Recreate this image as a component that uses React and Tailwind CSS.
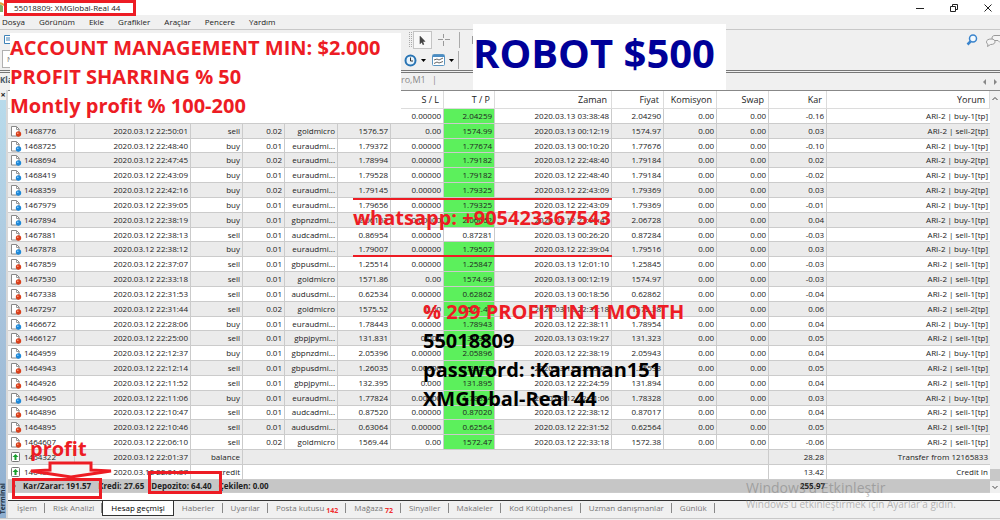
import { FaMousePointer } from "react-icons/fa";

const menu = ["Dosya", "Görünüm", "Ekle", "Grafikler", "Araçlar", "Pencere", "Yardım"];

const orders = [
  ["", "", "", "", "", "", "0.00000", "2.04259", "2020.03.13 03:38:48", "2.04290", "-0.16", "buy-1"],
  ["1468776", "2020.03.12 22:50:01", "sell", "0.02", "goldmicro", "1576.57", "0.00", "1574.99", "2020.03.13 00:12:19", "1574.97", "0.03", "sell-2"],
  ["1468725", "2020.03.12 22:48:40", "buy", "0.01", "euraudmi...", "1.79372", "0.00000", "1.77674", "2020.03.13 00:10:20", "1.77676", "-0.10", "buy-1"],
  ["1468694", "2020.03.12 22:47:45", "buy", "0.02", "euraudmi...", "1.78994", "0.00000", "1.79182", "2020.03.12 22:48:40", "1.79184", "0.02", "buy-2"],
  ["1468419", "2020.03.12 22:43:09", "buy", "0.01", "euraudmi...", "1.79528", "0.00000", "1.79182", "2020.03.12 22:48:40", "1.79184", "-0.02", "buy-1"],
  ["1468359", "2020.03.12 22:42:16", "buy", "0.02", "euraudmi...", "1.79145", "0.00000", "1.79325", "2020.03.12 22:43:09", "1.79369", "0.03", "buy-2"],
  ["1467979", "2020.03.12 22:39:05", "buy", "0.01", "euraudmi...", "1.79656", "0.00000", "1.79325", "2020.03.12 22:43:09", "1.79369", "-0.01", "buy-1"],
  ["1467894", "2020.03.12 22:38:19", "buy", "0.01", "gbpnzdmi...", "2.06162", "0.00000", "2.06662", "2020.03.12 23:09:41", "2.06728", "0.04", "buy-1"],
  ["1467881", "2020.03.12 22:38:13", "sell", "0.01", "audcadmi...", "0.86954", "0.00000", "0.87281", "2020.03.13 00:26:20", "0.87284", "-0.03", "sell-1"],
  ["1467878", "2020.03.12 22:38:12", "buy", "0.01", "euraudmi...", "1.79007", "0.00000", "1.79507", "2020.03.12 22:39:04", "1.79516", "0.03", "buy-1"],
  ["1467859", "2020.03.12 22:37:07", "sell", "0.01", "gbpusdmi...", "1.25514", "0.00000", "1.25847", "2020.03.13 12:01:10", "1.25845", "-0.03", "sell-1"],
  ["1467530", "2020.03.12 22:33:18", "sell", "0.01", "goldmicro", "1571.86", "0.00", "1574.99", "2020.03.13 00:12:19", "1574.97", "-0.03", "sell-1"],
  ["1467338", "2020.03.12 22:31:53", "sell", "0.01", "audusdmi...", "0.62534", "0.00000", "0.62862", "2020.03.13 00:18:56", "0.62862", "-0.04", "sell-1"],
  ["1467297", "2020.03.12 22:31:44", "sell", "0.02", "goldmicro", "1575.52", "0.00", "1572.47", "2020.03.12 22:33:18", "1572.38", "0.06", "sell-2"],
  ["1466672", "2020.03.12 22:28:06", "buy", "0.01", "euraudmi...", "1.78443", "0.00000", "1.78943", "2020.03.12 22:38:11", "1.78954", "0.04", "buy-1"],
  ["1466127", "2020.03.12 22:25:00", "sell", "0.01", "gbpjpymi...", "131.831", "0.000", "131.331", "2020.03.13 03:19:27", "131.323", "0.05", "sell-1"],
  ["1464959", "2020.03.12 22:12:37", "buy", "0.01", "gbpnzdmi...", "2.05396", "0.00000", "2.05896", "2020.03.12 22:38:19", "2.05943", "0.04", "buy-1"],
  ["1464943", "2020.03.12 22:12:14", "sell", "0.01", "gbpusdmi...", "1.26035", "0.00000", "1.25535", "2020.03.12 22:35:03", "1.25533", "0.05", "sell-1"],
  ["1464926", "2020.03.12 22:11:52", "sell", "0.01", "gbpjpymi...", "132.395", "0.000", "131.895", "2020.03.12 22:24:59", "131.894", "0.04", "sell-1"],
  ["1464905", "2020.03.12 22:11:06", "buy", "0.01", "euraudmi...", "1.77824", "0.00000", "1.78324", "2020.03.12 22:31:06", "1.78328", "0.03", "buy-1"],
  ["1464896", "2020.03.12 22:10:47", "sell", "0.01", "audcadmi...", "0.87520", "0.00000", "0.87020", "2020.03.12 22:38:12", "0.87017", "0.04", "sell-1"],
  ["1464895", "2020.03.12 22:10:46", "sell", "0.01", "audusdmi...", "0.63064", "0.00000", "0.62564", "2020.03.12 22:31:52", "0.62564", "0.05", "sell-1"],
  ["1464607", "2020.03.12 22:06:10", "sell", "0.02", "goldmicro", "1569.44", "0.00", "1572.47", "2020.03.12 22:33:18", "1572.38", "-0.06", "sell-1"],
];

const transfers = [
  ["1464322", "2020.03.12 22:01:37", "balance", "28.28", "Transfer from 12165833"],
  ["1464323", "2020.03.12 22:01:37", "credit", "13.42", "Credit In"],
];

const tabs = [
  { name: "İşlem" },
  { name: "Risk Analizi" },
  { name: "Hesap geçmişi", active: true },
  { name: "Haberler" },
  { name: "Uyarılar" },
  { name: "Posta kutusu", count: 142 },
  { name: "Mağaza", count: 72 },
  { name: "Sinyaller" },
  { name: "Makaleler" },
  { name: "Kod Kütüphanesi" },
  { name: "Uzman danışmanlar" },
  { name: "Günlük" },
];

const OrderIcon = ({ type }) => (
  <svg width="12" height="12" viewBox="0 0 12 12" className="shrink-0">
    <path d="M1.5 1.5h5l2.5 2.5v7h-7.500z" fill="#fff" stroke="#888" />
    <path d="M6.500 1.500v3h3" fill="none" stroke="#999" />
    <circle cx="8.500" cy="9" r="2.700" fill={type === "buy" ? "#1e88d8" : "#d8401c"} />
    <circle cx="7.800" cy="8.200" r="0.800" fill={type === "buy" ? "#8fd0ff" : "#ffa88a"} />
  </svg>
);

const TransferIcon = () => (
  <svg width="12" height="12" viewBox="0 0 12 12" className="shrink-0">
    <rect x="1.500" y="1.500" width="8" height="9" rx="1" fill="#fff" stroke="#777" />
    <path d="M5.500 3 L8.500 6 H6.500 V9 H4.500 V6 H2.500 Z" fill="#18a02c" />
  </svg>
);

const TitleBar = () => (
  <header className="flex h-[15px] items-center bg-white pr-2">
    <svg width="6" height="12" viewBox="0 0 6 12">
      <path d="M0 2l3 2v6H0z" fill="#7fb069" />
      <path d="M0 1l4 2" stroke="#e2a03c" strokeWidth="2" />
    </svg>
    <h1 className="flex-1 pl-2 text-[8px] leading-[12px]">55018809: XMGlobal-Real 44</h1>
    <div className="flex gap-[26px]">
      <button aria-label="Küçült">
        <svg width="8" height="10" viewBox="0 0 8 10" stroke="#222"><path d="M0 5.500h8" /></svg>
      </button>
      <button aria-label="Geri yükle">
        <svg width="8" height="10" viewBox="0 0 8 10" fill="none" stroke="#222">
          <path d="M.5 3.500h5v5h-5zM2.500 3.500v-2h5v5h-2" />
        </svg>
      </button>
      <button aria-label="Kapat">
        <svg width="8" height="10" viewBox="0 0 8 10" stroke="#222"><path d="M.5 1.500l7 7M7.500 1.500l-7 7" /></svg>
      </button>
    </div>
  </header>
);

const Toolbars = () => (
  <div className="flex h-[41px] justify-between border-t border-[#c8c8c8]">
    <div className="flex w-[401px] flex-col">
      <div className="flex h-5 items-center pl-1">
        <svg width="10" height="10" viewBox="0 0 10 10" fill="#fff" stroke="#3d82b8">
          <path d="M.5 .5h8v8h-8zM2 3h5M2 5h5" />
          <path d="M6 7h3M7.500 5.500v3" stroke="#2ca02c" />
        </svg>
      </div>
      <div className="ml-[2px] h-[18px] w-6 border border-[#b0b0b0] bg-white pl-1 text-[8px] leading-[16px] text-[#777]">N</div>
    </div>
    <div className="flex flex-1 flex-col">
      <div className="flex h-5 items-center pl-2">
        <svg width="4" height="16" viewBox="0 0 4 16" stroke="#aaa" strokeDasharray="1 1">
          <path d="M.5 0v16M2.500 0v16" />
        </svg>
        <button aria-label="İmleç" className="flex h-[18px] w-[19px] items-center justify-center border border-[#c4c4c4] bg-[#f8f8f8]">
          <FaMousePointer size={9} color="#444" />
        </button>
        <button aria-label="Artı imleç" className="ml-1">
          <svg width="15" height="14" viewBox="0 0 15 14" stroke="#999"><path d="M2 6.500h5M9 6.500h5M7.500 1v4M7.500 8v5" /></svg>
        </button>
        <span className="ml-2 h-4 w-px bg-[#aaa]" />
        <span className="ml-3 h-2 w-px bg-[#999]" />
      </div>
      <div className="flex h-5 items-center gap-[2px] pl-[3px]">
        <button aria-label="Periyotlar" className="flex items-center gap-1">
          <svg width="13" height="13" viewBox="0 0 13 13">
            <circle cx="6.500" cy="6.500" r="5" fill="#e8f4fc" stroke="#2874b4" strokeWidth="2" />
            <path d="M6.500 3.500v3.500h2.500" fill="none" stroke="#333" />
          </svg>
          <svg width="5" height="3" viewBox="0 0 5 3"><path d="M0 0h5L2.500 3z" /></svg>
        </button>
        <button aria-label="Şablonlar" className="ml-1 flex items-center gap-1">
          <svg width="13" height="12" viewBox="0 0 13 12">
            <rect x=".5" y=".5" width="12" height="11" rx="1" fill="#fff" stroke="#5a94c0" />
            <path d="M1 2h11" stroke="#4a8cc4" strokeWidth="2" />
            <path d="M2 6l3-1 2 1 4-2M2 9.500l3-1.500 2 1 4-1.500" fill="none" stroke="#666" />
          </svg>
          <svg width="5" height="3" viewBox="0 0 5 3"><path d="M0 0h5L2.500 3z" /></svg>
        </button>
        <span className="ml-[2px] h-[18px] w-px bg-[#aaa]" />
      </div>
    </div>
    <div className="flex h-5 items-center gap-2">
      <button aria-label="Ara">
        <svg width="12" height="12" viewBox="0 0 12 12" fill="none" stroke="#3a84cc">
          <circle cx="7" cy="4.500" r="3.500" strokeWidth="1.500" fill="#f4faff" />
          <path d="M4.500 7.500l-3 3" strokeWidth="2.500" />
        </svg>
      </button>
      <button aria-label="Sohbet">
        <svg width="14" height="13" viewBox="0 0 14 13" fill="#f4f4f4" stroke="#999">
          <path d="M14 1.500H9C7 1.500 6 2.500 6 4s1 2.500 3 2.500h3l2 2" />
          <path d="M5 5C2.500 5 .5 6 .5 7.800S1.500 10 2 10.300L1.500 12.500 4.500 10.500C7.500 10.500 9 9.500 9 7.800S7.500 5 5 5z" />
        </svg>
      </button>
    </div>
  </div>
);

const OrderRow = ({ order }) => {
  const [ticket, opened, type, size, symbol, price, sl, tp, closed, closePrice, profit, note] = order;
  return (
    <tr>
      <td>
        <div className="flex items-center gap-[2px] pl-[2px]">
          {ticket && <OrderIcon type={type} />}
          {ticket}
        </div>
      </td>
      <td>{opened}</td>
      <td>{type}</td>
      <td>{size}</td>
      <td>{symbol}</td>
      <td>{price}</td>
      <td>{sl}</td>
      <td className={ticket === "1467881" ? "" : "bg-[#5cf05c]"}>{tp}</td>
      <td>{closed}</td>
      <td>{closePrice}</td>
      <td>0.00</td>
      <td>0.00</td>
      <td>{profit}</td>
      <td>ARI-2 | {note}[tp]</td>
    </tr>
  );
};

const History = () => (
  <table className="h-[402px] w-full table-fixed border-separate border-spacing-0 bg-white text-right text-[8px] leading-[12px] whitespace-nowrap [&_td]:border-r [&_td]:border-b [&_td]:border-[#cbcbcb] [&_td]:p-0 [&_td]:pr-[2px] [&_td:last-child]:border-r-0 [&_th]:border-r [&_th]:border-b [&_th]:border-[#dcdcdc] [&_th]:p-0 [&_th]:pr-1 [&_th]:font-normal">
    <colgroup>
      <col className="w-[67px]" />
      <col className="w-[116px]" />
      <col className="w-[52px]" />
      <col className="w-[42px]" />
      <col className="w-[53px]" />
      <col className="w-[53px]" />
      <col className="w-[53px]" />
      <col className="w-[51px]" />
      <col className="w-[117px]" />
      <col className="w-[52px]" />
      <col className="w-[53px]" />
      <col className="w-[52px]" />
      <col className="w-[58px]" />
      <col />
    </colgroup>
    <thead>
      <tr className="h-[18px] text-[9px]">
        <th colSpan={6} />
        <th>S / L</th>
        <th>T / P</th>
        <th>Zaman</th>
        <th>Fiyat</th>
        <th>Komisyon</th>
        <th>Swap</th>
        <th>Kar</th>
        <th>Yorum</th>
      </tr>
    </thead>
    <tbody className="[&>tr:nth-child(even)]:bg-[#ebebeb]">
      {orders.map((order, i) => (
        <OrderRow key={i} order={order} />
      ))}
      {transfers.map(([ticket, time, type, amount, note]) => (
        <tr key={ticket}>
          <td>
            <div className="flex items-center gap-[2px] pl-[2px]">
              <TransferIcon />
              {ticket}
            </div>
          </td>
          <td>{time}</td>
          <td>{type}</td>
          <td colSpan={9} />
          <td>{amount}</td>
          <td>{note}</td>
        </tr>
      ))}
    </tbody>
    <tfoot className="bg-[#c6c6c6] font-bold">
      <tr>
        <td colSpan={12} className="border-r-0!">
          <div className="flex items-center gap-[7px] pl-1">
            <span className="h-1 w-1 rounded-full border border-[#888]" />
            <span>Kar/Zarar: 191.57</span>
            <span>Kredi: 27.65</span>
            <span>Depozito: 64.40</span>
            <span>Çekilen: 0.00</span>
          </div>
        </td>
        <td className="border-r-0!">255.97</td>
        <td />
      </tr>
    </tfoot>
  </table>
);

const Tabs = () => (
  <nav className="flex h-[18px] items-start border-t border-[#333] pl-px text-[8px] leading-[14px] text-[#777]">
    {tabs.map(({ name, count, active }) =>
      active ? (
        <button key={name} className="h-[15px] border-x border-b border-[#333] bg-white px-2 text-black">
          {name}
        </button>
      ) : (
        <button key={name} className="flex items-center pr-[7px] pl-2">
          {name}
          {count && <span className="pt-1 pl-[2px] text-[7px] font-bold leading-[9px] text-[#f03030]">{count}</span>}
          <span className="-mr-[7px] ml-[7px] h-[10px] w-px bg-[#888]" />
        </button>
      )
    )}
  </nav>
);

// notes pasted over the terminal window
const Notes = () => (
  <div className="pointer-events-none font-bold text-[#ed1c24]">
    <div className="absolute top-0 left-1 h-4 w-[132px] border-[3px] border-[#ed1c24]" />
    <div className="absolute top-[33px] left-[10px] h-[90px] w-[391px] bg-white text-[20px] leading-[29px] whitespace-nowrap">
      <p>ACCOUNT MANAGEMENT MIN: $2.000</p>
      <p>PROFIT SHARRING % 50</p>
      <p>Montly profit % 100-200</p>
    </div>
    <p className="absolute top-6 left-[473px] h-[66px] w-[253px] bg-white text-[40px] leading-[58px] whitespace-nowrap text-[#000099]">
      ROBOT $500
    </p>
    <p className="absolute top-[198px] left-[353px] h-[59px] w-[259px] border-y-2 border-[#ed1c24] text-[20px] leading-[36px] whitespace-nowrap">
      whatsapp: +905423367543
    </p>
    <div className="absolute top-[297px] left-[423px] text-[20px] leading-[29px] whitespace-nowrap text-black">
      <p className="text-[#ed1c24]">% 299 PROFIT IN 1 MONTH</p>
      <p>55018809</p>
      <p>password: :Karaman151</p>
      <p>XMGlobal-Real 44</p>
    </div>
    <p className="absolute top-[436px] left-[30px] text-[20px] leading-[26px]">profit</p>
    <svg className="absolute top-[460px] left-[28px]" width="86" height="20" viewBox="0 0 86 20">
      <path d="M22 3h41v7l20 1-40 6L3 11l19-1z" fill="#f6f6f6" stroke="#ed1c24" strokeWidth="3" />
    </svg>
    <div className="absolute top-[478px] left-3 h-[21px] w-[90px] border-[3px] border-[#ed1c24]" />
    <div className="absolute top-[471px] left-[148px] h-[23px] w-[74px] border-[3px] border-[#ed1c24]" />
    <div className="absolute top-[479px] left-[746px] font-normal whitespace-nowrap text-[#777]/50">
      <p className="text-[14px] leading-[17px]">Windows'u Etkinleştir</p>
      <p className="text-[10px] leading-[17px]">Windows'u etkinleştirmek için Ayarlar'a gidin.</p>
    </div>
  </div>
);

export default function App() {
  return (
    <div className="relative overflow-hidden bg-[#f0f0f0] font-['Open_Sans','Noto_Sans',sans-serif] text-[#222]">
      <TitleBar />
      <nav className="flex h-[14px] gap-[14px] pl-[2px] text-[8px] leading-[14px]">
        {menu.map((item) => (
          <button key={item}>{item}</button>
        ))}
      </nav>
      <Toolbars />
      <div className="flex h-5 border-t-[3px] border-double border-[#777] text-[9px] leading-[14px] text-[#888]">
        <span className="w-[401px] text-[8px] font-bold text-[#456]">Kla</span>
        <span className="flex-1">
          ro,M1 <span className="pl-1">|</span>
        </span>
        <span className="flex items-center gap-2 pr-[2px]">
          <svg width="4" height="6" viewBox="0 0 4 6" fill="#888"><path d="M4 0v6L1 3z" /></svg>
          <svg width="4" height="6" viewBox="0 0 4 6" fill="#888"><path d="M0 0v6l3-3z" /></svg>
        </span>
      </div>
      <main className="flex">
        <aside className="flex w-[8px] flex-col items-center justify-between border-r-2 border-[#d8d8d8] bg-linear-to-b from-[#b9dcec] via-[#a9c4dc] to-[#8fafd0] pb-1">
          <button aria-label="Kapat" className="w-full bg-[#f0f0f0] text-[9px] font-bold leading-[10px]">×</button>
          <span className="rotate-180 text-[7px] font-bold leading-[6px] text-[#234] [writing-mode:vertical-rl]">Terminal</span>
        </aside>
        <div className="min-w-0 flex-1">
          <div className="flex border-t border-[#888] bg-white pb-[7px]">
            <div className="min-w-0 flex-1">
              <History />
            </div>
            <div className="flex w-[10px] flex-col items-center justify-between bg-[#f0f0f0]">
              <svg width="6" height="14" viewBox="0 0 6 14" fill="none" stroke="#444"><path d="M.5 9L3 6.500 5.500 9" /></svg>
              <div className="flex w-full flex-col items-center">
                <div className="h-3 w-full bg-[#c8c8c8]" />
                <svg width="6" height="12" viewBox="0 0 6 12" fill="none" stroke="#444"><path d="M.5 5L3 7.500 5.500 5" /></svg>
              </div>
            </div>
          </div>
          <Tabs />
        </div>
      </main>
      <footer className="h-[2px] border-t border-[#c8c8c8]" />
      <Notes />
    </div>
  );
}
